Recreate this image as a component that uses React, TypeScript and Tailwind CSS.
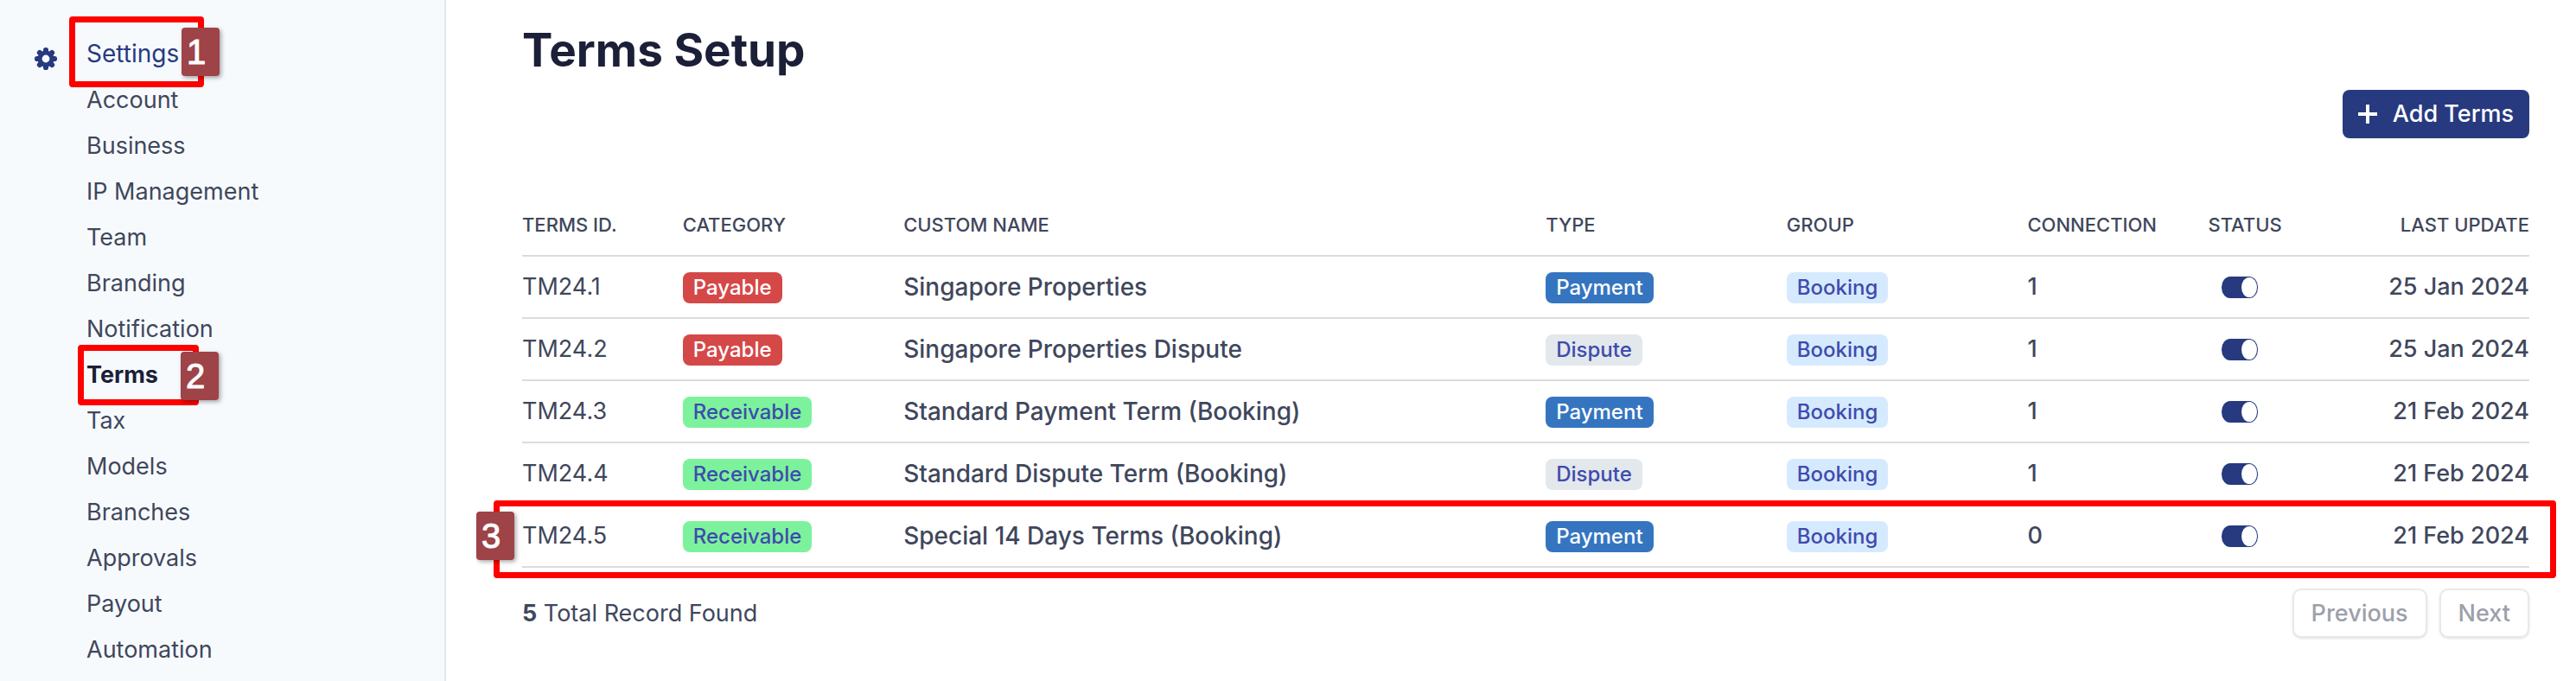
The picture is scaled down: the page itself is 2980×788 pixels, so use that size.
import React from 'react';

const menu = [
  'Account',
  'Business',
  'IP Management',
  'Team',
  'Branding',
  'Notification',
  'Terms',
  'Tax',
  'Models',
  'Branches',
  'Approvals',
  'Payout',
  'Automation',
];

const terms = [
  { id: 'TM24.1', category: 'Payable', name: 'Singapore Properties', type: 'Payment', group: 'Booking', connection: 1, updated: '25 Jan 2024' },
  { id: 'TM24.2', category: 'Payable', name: 'Singapore Properties Dispute', type: 'Dispute', group: 'Booking', connection: 1, updated: '25 Jan 2024' },
  { id: 'TM24.3', category: 'Receivable', name: 'Standard Payment Term (Booking)', type: 'Payment', group: 'Booking', connection: 1, updated: '21 Feb 2024' },
  { id: 'TM24.4', category: 'Receivable', name: 'Standard Dispute Term (Booking)', type: 'Dispute', group: 'Booking', connection: 1, updated: '21 Feb 2024' },
  { id: 'TM24.5', category: 'Receivable', name: 'Special 14 Days Terms (Booking)', type: 'Payment', group: 'Booking', connection: 0, updated: '21 Feb 2024' },
];

const tagColors: Record<string, string> = {
  Payable: 'bg-[#d54848] text-white',
  Receivable: 'bg-[#7df29d] text-[#3f4bad]',
  Payment: 'bg-[#3575c0] text-white',
  Dispute: 'bg-[#e2e8ec] text-[#3f4bad]',
  Booking: 'bg-[#d6eaff] text-[#3f4bad]',
};

function Tag({ label }: { label: string }) {
  return (
    <span className={`inline-block h-9 rounded-lg px-3 align-middle text-2xl leading-9 font-medium ${tagColors[label]}`}>
      {label}
    </span>
  );
}

function Step({ n, className }: { n: number; className: string }) {
  return (
    <span
      className={`absolute z-20 h-14 w-11 rounded bg-[#9e4347] pl-1.5 font-['Liberation_Sans',sans-serif] text-[40px] leading-14 font-normal text-white shadow-[2px_2px_5px_rgba(0,0,0,0.35)] [-webkit-text-stroke:1px_white] ${className}`}
    >
      {n}
    </span>
  );
}

function Outline({ className }: { className: string }) {
  return <span className={`pointer-events-none absolute z-10 rounded border-[7px] border-[#ff0000] ${className}`} />;
}

function Gear() {
  return (
    <svg viewBox="0 0 26 26" className="h-[26px] w-[26px]" aria-hidden="true">
      <g fill="#273a7f">
        {[0, 45, 90, 135].map((a) => (
          <rect key={a} x="10" y="0" width="6" height="26" rx="2.8" transform={`rotate(${a} 13 13)`} />
        ))}
        <circle cx="13" cy="13" r="9.6" />
      </g>
      <circle cx="13" cy="13" r="4.4" fill="#f7fafd" />
    </svg>
  );
}

function Sidebar() {
  return (
    <aside className="w-[516px] shrink-0 border-r-2 border-[#e3e6ea] bg-[#f7fafd] pt-9">
      <nav className="flex pl-10">
        <div className="mr-[34px] pt-[19px]">
          <Gear />
        </div>
        <ul className="text-[27px] leading-[53px]">
          <li className="relative">
            <a href="#settings" className="text-[28px] text-[#273a7f]">Settings</a>
            <Outline className="-top-[17px] -left-5 h-[82px] w-[156px]" />
            <Step n={1} className="-top-1 left-[110px]" />
          </li>
          {menu.map((item) => (
            <li key={item} className="relative">
              <a href={`#${item}`} className={item === 'Terms' ? 'font-bold text-[#1b1f37]' : 'text-[#3f475c]'}>
                {item}
              </a>
              {item === 'Terms' && (
                <>
                  <Outline className="-top-2 -left-2.5 h-[70px] w-[140px]" />
                  <Step n={2} className="top-0 left-[109px]" />
                </>
              )}
            </li>
          ))}
        </ul>
      </nav>
    </aside>
  );
}

function TermsTable() {
  return (
    <div className="relative">
      <table className="w-full table-fixed text-left text-[#3f475c]">
        <colgroup>
          <col className="w-[8%]" />
          <col className="w-[11%]" />
          <col className="w-[32%]" />
          <col className="w-[12%]" />
          <col className="w-[12%]" />
          <col className="w-[9%]" />
          <col className="w-[4%]" />
          <col className="w-[12%]" />
        </colgroup>
        <thead>
          <tr className="h-[74px] border-b-2 border-[#dcdcde] text-[22px] leading-7 whitespace-nowrap [&>th]:pt-0.5 [&>th]:font-medium">
            <th>TERMS ID.</th>
            <th>CATEGORY</th>
            <th>CUSTOM NAME</th>
            <th>TYPE</th>
            <th>GROUP</th>
            <th>CONNECTION</th>
            <th>STATUS</th>
            <th className="text-right">LAST UPDATE</th>
          </tr>
        </thead>
        <tbody>
          {terms.map((t) => (
            <tr key={t.id} className="h-[72px] border-b-2 border-[#dcdcde] text-[27px] font-medium">
              <td className="font-normal">{t.id}</td>
              <td><Tag label={t.category} /></td>
              <td className="text-[28px]">{t.name}</td>
              <td><Tag label={t.type} /></td>
              <td><Tag label={t.group} /></td>
              <td>{t.connection}</td>
              <td>
                <input
                  type="checkbox"
                  role="switch"
                  defaultChecked
                  aria-label={`${t.id} status`}
                  className="ml-4 flex h-[25px] w-[42px] appearance-none items-center rounded-[10px/12px] bg-[#273a7f] px-px before:h-[23px] before:w-[18px] before:rounded-[50%] before:bg-white before:content-[''] checked:justify-end"
                />
              </td>
              <td className="text-right">{t.updated}</td>
            </tr>
          ))}
        </tbody>
      </table>
      <Outline className="-right-[31px] -bottom-3 -left-[33px] h-[90px]" />
      <Step n={3} className="bottom-[9px] -left-[53px]" />
    </div>
  );
}

export default function App() {
  return (
    <div className="flex min-h-screen bg-white font-['Inter',sans-serif]">
      <Sidebar />
      <main className="flex-1 pt-6 pr-[54px] pl-[88px]">
        <h1 className="text-[53px] leading-[68px] font-bold text-[#1b1f37]">Terms Setup</h1>
        <div className="mt-3 flex justify-end">
          <button className="flex h-14 items-center gap-[18px] rounded-lg bg-[#273a7f] px-[18px] text-[27px] font-medium text-white">
            <svg viewBox="0 0 22 22" className="h-[22px] w-[22px]" stroke="currentColor" strokeWidth="4" aria-hidden="true">
              <path d="M11 0v22M0 11h22" />
            </svg>
            Add Terms
          </button>
        </div>
        <div className="mt-[62px]">
          <TermsTable />
        </div>
        <div className="mt-6 flex items-start justify-between text-[27px] leading-[57px] text-[#3f475c]">
          <p><b>5</b> Total Record Found</p>
          <div className="flex gap-3.5">
            <button className="h-[57px] rounded-[10px] border-2 border-[#e8e8ea] px-5 leading-[53px] font-medium text-[#9ca0ab] shadow-sm">Previous</button>
            <button className="h-[57px] rounded-[10px] border-2 border-[#e8e8ea] px-5 leading-[53px] font-medium text-[#9ca0ab] shadow-sm">Next</button>
          </div>
        </div>
      </main>
    </div>
  );
}
